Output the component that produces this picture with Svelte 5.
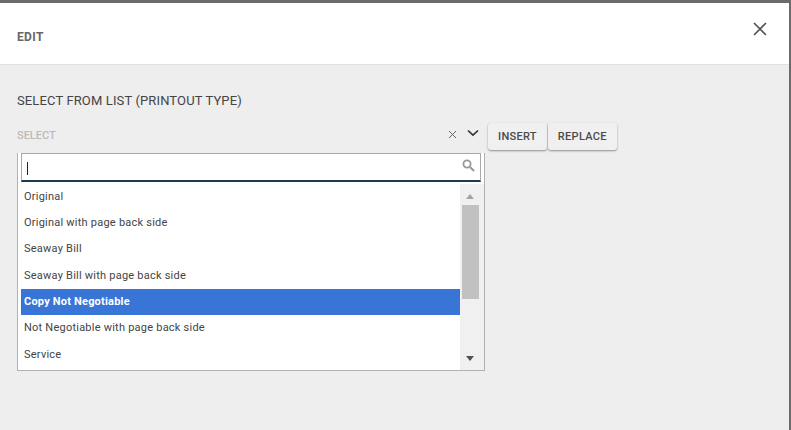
<script>
  const options = [
    'Original',
    'Original with page back side',
    'Seaway Bill',
    'Seaway Bill with page back side',
    'Copy Not Negotiable',
    'Not Negotiable with page back side',
    'Service'
  ]
  let selected = 'Copy Not Negotiable'
</script>

<div class="backdrop">
  <div class="modal">
    <header class="head">
      <h2>EDIT</h2>
      <button type="button" class="close" aria-label="Close">
        <svg width="16" height="16" viewBox="0 0 16 16">
          <path d="M2 2L14 14M14 2L2 14" fill="none" stroke="#555" stroke-width="1.7" />
        </svg>
      </button>
    </header>

    <section class="body">
      <div class="title">SELECT FROM LIST (PRINTOUT TYPE)</div>

      <div class="row">
        <div class="select">
          <div class="select-line">
            <span class="placeholder">SELECT</span>
            <svg class="clear" width="9" height="9" viewBox="0 0 9 9">
              <path d="M1 1L8 8M8 1L1 8" fill="none" stroke="#666" stroke-width="1" />
            </svg>
            <svg class="chev" width="12" height="8" viewBox="0 0 12 8">
              <path d="M1 1.5L6 6.2L11 1.5" fill="none" stroke="#333" stroke-width="1.7" />
            </svg>
          </div>

          <div class="dropdown">
            <div class="search">
              <span class="caret"></span>
              <svg class="lens" width="13" height="13" viewBox="0 0 13 13">
                <circle cx="5" cy="5" r="3.6" fill="none" stroke="#999" stroke-width="1.8" />
                <path d="M8 8L12 12" stroke="#999" stroke-width="2.2" />
              </svg>
            </div>
            <div class="list-wrap">
              <ul class="list">
                {#each options as opt}
                  <li class:sel={opt === selected}>{opt}</li>
                {/each}
              </ul>
              <div class="scroll">
                <span class="arrow up"></span>
                <span class="thumb"></span>
                <span class="arrow down"></span>
              </div>
            </div>
          </div>
        </div>

        <div class="actions">
          <button type="button" class="btn">INSERT</button>
          <button type="button" class="btn">REPLACE</button>
        </div>
      </div>
    </section>
  </div>
</div>

<style>
  :global(body) {
    margin: 0;
    background: #6b6b6b;
  }

  .backdrop {
    height: 430px;
    width: 791px;
    overflow: hidden;
    background: #6b6b6b;
    padding: 3px 2px 0 0;
    box-sizing: border-box;
    font-family: Roboto, "Liberation Sans", sans-serif;
  }

  .modal {
    height: 427px;
    background: #eee;
    display: flex;
    flex-direction: column;
  }

  .head {
    height: 62px;
    box-sizing: border-box;
    flex-shrink: 0;
    background: #fff;
    border-bottom: 1px solid #e0e0e0;
    display: flex;
    align-items: center;
    justify-content: space-between;
    padding: 0 21px 0 17px;
  }

  h2 {
    margin: 0;
    font-size: 12px;
    font-weight: 700;
    color: #666;
    letter-spacing: 0.35px;
    position: relative;
    top: 3px;
  }

  .close {
    border: 0;
    background: none;
    padding: 0;
    width: 16px;
    height: 16px;
    margin-bottom: 10px;
  }

  .close svg { display: block; }

  .body {
    padding: 29px 0 0 17px;
  }

  .title {
    font-size: 13px;
    line-height: 14px;
    color: #444;
    letter-spacing: 0.13px;
  }

  .row {
    display: flex;
    align-items: flex-start;
    margin-top: 15px;
  }

  .select {
    width: 468px;
  }

  .select-line {
    height: 30px;
    display: flex;
    align-items: flex-start;
    padding-top: 6px;
    box-sizing: border-box;
    position: relative;
  }

  .placeholder {
    font-size: 11px;
    line-height: 14px;
    font-weight: 500;
    color: #bbb;
    flex: 1;
  }

  .clear {
    margin: 0 10px 0 0;
    position: relative;
    top: 1px;
  }

  .chev {
    margin-right: 6px;
    position: relative;
    top: 0;
  }

  .dropdown {
    width: 468px;
    height: 218px;
    box-sizing: border-box;
    background: #fff;
    border: 1px solid #b2b2b2;
    border-top: 0;
    padding: 0 0 0 3px;
    margin-top: 0;
  }

  .search {
    height: 29px;
    box-sizing: border-box;
    background: #fff;
    border: 1px solid #a8a8a8;
    border-bottom: 2px solid #1c3d50;
    position: relative;
    margin: 0 3px 1.5px 0;
  }

  .caret {
    position: absolute;
    left: 5px;
    top: 8px;
    width: 1px;
    height: 13px;
    background: #222;
  }

  .lens {
    position: absolute;
    right: 5px;
    top: 5px;
  }

  .list-wrap {
    display: flex;
    height: 186.5px;
    overflow: hidden;
  }

  .list {
    list-style: none;
    margin: 0;
    padding: 0;
    flex: 1;
    min-width: 0;
  }

  .list li {
    height: 26.4px;
    line-height: 26.4px;
    font-size: 11px;
    color: #444;
    padding-left: 3px;
    letter-spacing: 0.23px;
    white-space: nowrap;
  }

  .list li.sel {
    background: #3875d7;
    color: #fff;
    font-weight: 700;
    letter-spacing: 0.2px;
  }

  .scroll {
    width: 24px;
    flex-shrink: 0;
    background: #f0f0f0;
    position: relative;
  }

  .thumb {
    position: absolute;
    left: 2px;
    width: 17px;
    top: 21px;
    height: 94px;
    background: #c1c1c1;
  }

  .arrow {
    position: absolute;
    left: 6px;
    width: 0;
    height: 0;
    border-left: 4.5px solid transparent;
    border-right: 4.5px solid transparent;
  }

  .arrow.up {
    top: 10px;
    border-bottom: 5px solid #a3a3a3;
  }

  .arrow.down {
    bottom: 9px;
    border-top: 5px solid #505050;
  }

  .actions {
    display: flex;
    gap: 1px;
    margin-left: 3px;
  }

  .btn {
    height: 27px;
    padding: 0 10px;
    font-family: inherit;
    font-size: 11px;
    font-weight: 500;
    letter-spacing: 0.3px;
    color: #4a4a4a;
    background: #f0f0f0;
    border: 0;
    border-radius: 3px;
    box-shadow: 0 1px 2px rgba(0, 0, 0, 0.4);
  }
</style>
